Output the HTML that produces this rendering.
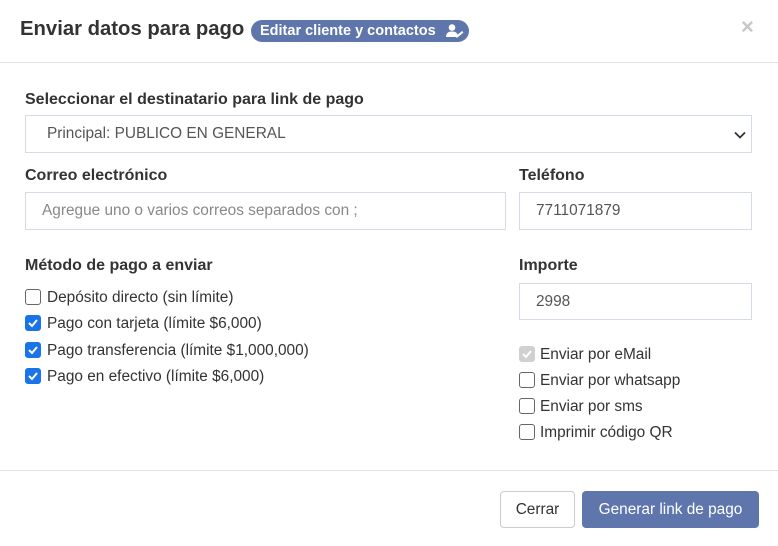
<!DOCTYPE html>
<html><head><meta charset="utf-8"><style>
*{box-sizing:border-box;margin:0;padding:0}
body{width:778px;height:546px;background:#fff;font-family:"Liberation Sans",sans-serif;color:#333;position:relative;overflow:hidden}
.a{position:absolute;white-space:nowrap}
.t{left:20px;top:18px;font-size:20.3px;font-weight:bold;color:#333}
.badge{left:251px;top:20px;width:218px;height:22px;border-radius:11px;background:#5f76ad;color:#fff;font-weight:bold;font-size:14.5px;line-height:22px;padding-left:9px}
.x{left:741px;top:14px;font-size:22px;color:#c8c8c8;font-weight:bold}
.hr{left:0;width:778px;height:1px;background:#e5e5e5}
.lb{font-weight:bold;font-size:16px;color:#333}
.in{border:1px solid #d5dbe6;background:#fff;font-size:15.4px;color:#555;padding-left:16px;display:flex;align-items:center}
.cb{width:16px;height:16px;border:1.5px solid #666;border-radius:3px;background:#fff}
.cb.on{background:#1a73e8;border-color:#1a73e8}
.cb.dis{background:#d0d0d0;border-color:#d0d0d0}
.cb svg{position:absolute;left:1px;top:1px}
.ct{font-size:15.4px;color:#333}
.btn{border-radius:4px;font-size:15.4px;display:flex;align-items:center;justify-content:center}
</style></head><body>
<div class="a t">Enviar datos para pago</div>
<div class="a badge">Editar cliente y contactos<svg width="18" height="14" viewBox="0 0 18 14" style="position:absolute;left:195px;top:4px"><circle cx="6" cy="3.5" r="3.3" fill="#fff"/><path d="M0 13c0-4 2.5-5.5 6-5.5s6 1.5 6 5.5z" fill="#fff"/><path d="M10 12l6-5 1.5 1.5-6 5H10z" fill="#fff"/></svg></div>
<div class="a x">×</div>
<div class="a hr" style="top:62px"></div>

<div class="a lb" style="left:25px;top:91px">Seleccionar el destinatario para link de pago</div>
<div class="a in" style="left:25px;top:115px;width:727px;height:38px;padding-left:21px">Principal: PUBLICO EN GENERAL
<svg width="12" height="8" viewBox="0 0 12 8" style="position:absolute;right:5px;top:15px"><path d="M1 1.5l5 5 5-5" stroke="#333" stroke-width="1.8" fill="none"/></svg></div>

<div class="a lb" style="left:25px;top:167px">Correo electrónico</div>
<div class="a in" style="left:25px;top:192px;width:481px;height:38px;color:#888">Agregue uno o varios correos separados con ;</div>
<div class="a lb" style="left:519px;top:167px">Teléfono</div>
<div class="a in" style="left:519px;top:192px;width:233px;height:38px">7711071879</div>

<div class="a lb" style="left:25px;top:257px">Método de pago a enviar</div>
<div class="a lb" style="left:519px;top:257px">Importe</div>
<div class="a in" style="left:519px;top:283px;width:233px;height:37px">2998</div>

<div class="a cb" style="left:25px;top:289px"></div><div class="a ct" style="left:47px;top:289px">Depósito directo (sin límite)</div>
<div class="a cb on" style="left:25px;top:315px"><svg width="12" height="12" viewBox="0 0 12 12"><path d="M2 6l3 3 5-6" stroke="#fff" stroke-width="2" fill="none"/></svg></div><div class="a ct" style="left:47px;top:315px">Pago con tarjeta (límite $6,000)</div>
<div class="a cb on" style="left:25px;top:342px"><svg width="12" height="12" viewBox="0 0 12 12"><path d="M2 6l3 3 5-6" stroke="#fff" stroke-width="2" fill="none"/></svg></div><div class="a ct" style="left:47px;top:342px">Pago transferencia (límite $1,000,000)</div>
<div class="a cb on" style="left:25px;top:368px"><svg width="12" height="12" viewBox="0 0 12 12"><path d="M2 6l3 3 5-6" stroke="#fff" stroke-width="2" fill="none"/></svg></div><div class="a ct" style="left:47px;top:368px">Pago en efectivo (límite $6,000)</div>

<div class="a cb dis" style="left:519px;top:346px"><svg width="12" height="12" viewBox="0 0 12 12"><path d="M2 6l3 3 5-6" stroke="#fff" stroke-width="2" fill="none"/></svg></div><div class="a ct" style="left:540px;top:346px">Enviar por eMail</div>
<div class="a cb" style="left:519px;top:372px"></div><div class="a ct" style="left:540px;top:372px">Enviar por whatsapp</div>
<div class="a cb" style="left:519px;top:398px"></div><div class="a ct" style="left:540px;top:398px">Enviar por sms</div>
<div class="a cb" style="left:519px;top:424px"></div><div class="a ct" style="left:540px;top:424px">Imprimir código QR</div>

<div class="a hr" style="top:470px"></div>
<div class="a btn" style="left:500px;top:491px;width:75px;height:37px;border:1px solid #ccc;color:#333">Cerrar</div>
<div class="a btn" style="left:582px;top:491px;width:177px;height:37px;background:#5f76ad;color:#fff">Generar link de pago</div>
</body></html>
